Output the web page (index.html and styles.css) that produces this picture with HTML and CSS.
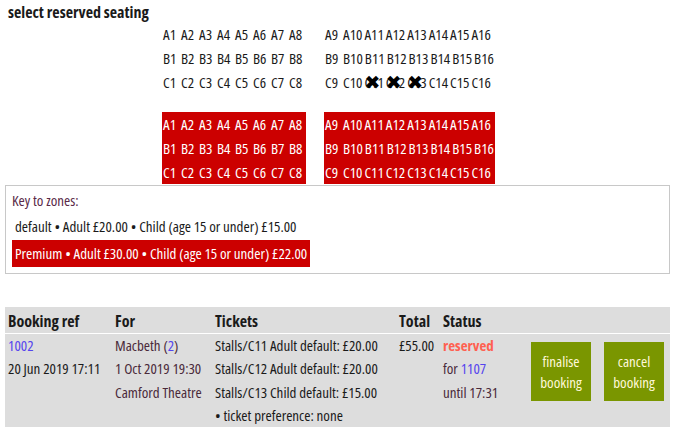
FILE: index.html
```html
<!DOCTYPE html>
<html>
<head>
<meta charset="utf-8">
<link rel="stylesheet" href="styles.css">
</head>
<body>
<h1 class="title">select reserved seating</h1>
<div class="plan">
  <div class="block">
    <div class="row"><span class="seat">A1</span><span class="seat">A2</span><span class="seat">A3</span><span class="seat">A4</span><span class="seat">A5</span><span class="seat">A6</span><span class="seat">A7</span><span class="seat">A8</span></div>
    <div class="row"><span class="seat">B1</span><span class="seat">B2</span><span class="seat">B3</span><span class="seat">B4</span><span class="seat">B5</span><span class="seat">B6</span><span class="seat">B7</span><span class="seat">B8</span></div>
    <div class="row"><span class="seat">C1</span><span class="seat">C2</span><span class="seat">C3</span><span class="seat">C4</span><span class="seat">C5</span><span class="seat">C6</span><span class="seat">C7</span><span class="seat">C8</span></div>
  </div>
  <div class="block">
    <div class="row"><span class="seat">A9</span><span class="seat">A10</span><span class="seat">A11</span><span class="seat">A12</span><span class="seat">A13</span><span class="seat">A14</span><span class="seat">A15</span><span class="seat">A16</span></div>
    <div class="row"><span class="seat">B9</span><span class="seat">B10</span><span class="seat">B11</span><span class="seat">B12</span><span class="seat">B13</span><span class="seat">B14</span><span class="seat">B15</span><span class="seat">B16</span></div>
    <div class="row"><span class="seat">C9</span><span class="seat">C10</span><span class="seat taken">C11<span class="cross">✖</span></span><span class="seat taken">C12<span class="cross">✖</span></span><span class="seat taken">C13<span class="cross">✖</span></span><span class="seat">C14</span><span class="seat">C15</span><span class="seat">C16</span></div>
  </div>
</div>
<div class="plan zoned">
  <div class="block premium">
    <div class="row"><span class="seat">A1</span><span class="seat">A2</span><span class="seat">A3</span><span class="seat">A4</span><span class="seat">A5</span><span class="seat">A6</span><span class="seat">A7</span><span class="seat">A8</span></div>
    <div class="row"><span class="seat">B1</span><span class="seat">B2</span><span class="seat">B3</span><span class="seat">B4</span><span class="seat">B5</span><span class="seat">B6</span><span class="seat">B7</span><span class="seat">B8</span></div>
    <div class="row"><span class="seat">C1</span><span class="seat">C2</span><span class="seat">C3</span><span class="seat">C4</span><span class="seat">C5</span><span class="seat">C6</span><span class="seat">C7</span><span class="seat">C8</span></div>
  </div>
  <div class="block premium">
    <div class="row"><span class="seat">A9</span><span class="seat">A10</span><span class="seat">A11</span><span class="seat">A12</span><span class="seat">A13</span><span class="seat">A14</span><span class="seat">A15</span><span class="seat">A16</span></div>
    <div class="row"><span class="seat">B9</span><span class="seat">B10</span><span class="seat">B11</span><span class="seat">B12</span><span class="seat">B13</span><span class="seat">B14</span><span class="seat">B15</span><span class="seat">B16</span></div>
    <div class="row"><span class="seat">C9</span><span class="seat">C10</span><span class="seat">C11</span><span class="seat">C12</span><span class="seat">C13</span><span class="seat">C14</span><span class="seat">C15</span><span class="seat">C16</span></div>
  </div>
</div>
<div class="key">
  <div class="key-title">Key to zones:</div>
  <div class="zone">default • Adult £20.00 • Child (age 15 or under) £15.00</div>
  <div class="zone zone-premium">Premium • Adult £30.00 • Child (age 15 or under) £22.00</div>
</div>
<table class="bookings">
  <colgroup>
    <col class="c-ref"><col class="c-for"><col class="c-tickets"><col class="c-total"><col class="c-status"><col class="c-btn1"><col class="c-btn2">
  </colgroup>
  <thead>
    <tr><th>Booking ref</th><th>For</th><th>Tickets</th><th>Total</th><th>Status</th><th></th><th></th></tr>
  </thead>
  <tbody>
    <tr>
      <td><a class="link" href="#">1002</a><br>20 Jun 2019 17:11</td>
      <td class="show">Macbeth (<a class="link" href="#">2</a>)<br>1 Oct 2019 19:30<br>Camford Theatre</td>
      <td>Stalls/C11 Adult default: £20.00<br>Stalls/C12 Adult default: £20.00<br>Stalls/C13 Child default: £15.00<br>• ticket preference: none</td>
      <td>£55.00</td>
      <td class="show"><span class="reserved">reserved</span><br>for <a class="link" href="#">1107</a><br>until 17:31</td>
      <td class="btn-cell"><button class="btn">finalise<br>booking</button></td>
      <td class="btn-cell"><button class="btn">cancel<br>booking</button></td>
    </tr>
  </tbody>
</table>
</body>
</html>
```
FILE: styles.css
```css
body {
  margin: 0;
  padding: 0 6px 0 5px;
  font-family: "Open Sans", "DejaVu Sans", sans-serif;
  font-stretch: 75%;
  font-size: 15px;
  color: #1a1a1a;
}
.title {
  box-sizing: border-box;
  font-size: 16px;
  font-weight: 700;
  margin: 0;
  padding: 2px 3px 0;
  line-height: 20px;
  height: 22px;
}
.plan {
  display: flex;
  gap: 18px;
  margin-left: 157px;
}
.plan.zoned {
  margin-top: 18px;
}
.block {
  display: flex;
  flex-direction: column;
}
.row {
  display: flex;
  height: 24px;
  line-height: 24px;
}
.seat {
  position: relative;
  min-width: 16px;
  padding: 0 1px;
}
.premium {
  background: #cc0000;
  color: #fff;
}
.cross {
  position: absolute;
  left: 1px;
  top: 0;
  font-family: "DejaVu Sans", sans-serif;
  font-size: 19px;
  line-height: 24px;
  font-weight: 700;
  color: #000;
  font-stretch: 100%;
}
.key {
  border: 1px solid #c8c8c8;
  padding: 1px 6px 6px 6px;
  margin-top: 1px;
}
.key-title {
  color: #5a2a48;
  line-height: 26px;
}
.zone {
  line-height: 26px;
  padding: 0 3px;
}
.zone-premium {
  display: inline-block;
  background: #cc0000;
  color: #fff;
  line-height: 27px;
  margin-top: 1px;
}
.bookings {
  margin-top: 33px;
  width: 100%;
  table-layout: fixed;
  border-collapse: collapse;
  background: #dddddd;
}
.c-ref { width: 107px; }
.c-for { width: 100px; }
.c-tickets { width: 184px; }
.c-total { width: 44px; }
.c-status { width: 88px; }
.c-btn1 { width: 73px; }
.c-btn2 { width: 69px; }
.bookings th {
  text-align: left;
  font-size: 16px;
  font-weight: 700;
  padding: 3px 3px 1px;
  line-height: 22px;
  border-bottom: 1px solid #fff;
  white-space: nowrap;
}
.bookings td {
  vertical-align: top;
  padding: 0 3px;
  line-height: 23.3px;
  white-space: nowrap;
}
.show {
  color: #4a2a3a;
}
.link {
  color: #5544ee;
  text-decoration: none;
}
.reserved {
  color: #ff6050;
  font-weight: 700;
}
.bookings td.btn-cell {
  padding-top: 8px;
}
.btn {
  display: block;
  background: #7a9600;
  color: #fff8d8;
  border: none;
  font-family: inherit;
  font-stretch: 75%;
  font-size: 15px;
  line-height: 21px;
  width: 60px;
  height: 59px;
  padding: 0;
}
```
